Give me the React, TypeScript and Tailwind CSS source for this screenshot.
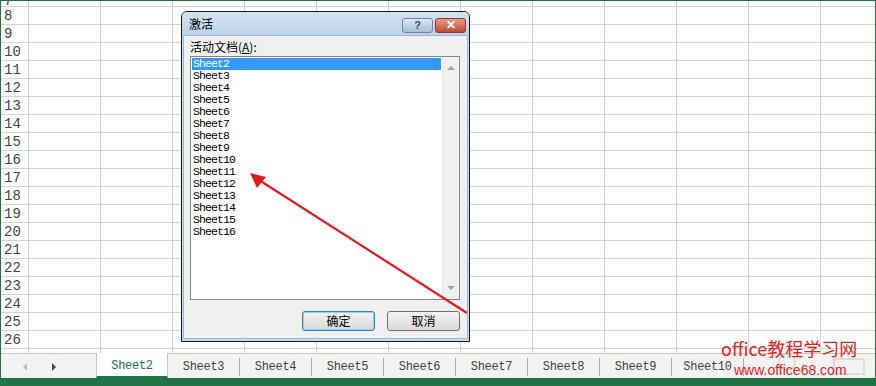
const rows = [8, 9, 10, 11, 12, 13, 14, 15, 16, 17, 18, 19, 20, 21, 22, 23, 24, 25, 26]
const cols = Array.from({ length: 12 }, (_, i) => i)
const sheets = ['Sheet2', 'Sheet3', 'Sheet4', 'Sheet5', 'Sheet6', 'Sheet7', 'Sheet8', 'Sheet9', 'Sheet10', 'Sheet11', 'Sheet12', 'Sheet13', 'Sheet14', 'Sheet15', 'Sheet16']
const tabs = ['Sheet2', 'Sheet3', 'Sheet4', 'Sheet5', 'Sheet6', 'Sheet7', 'Sheet8', 'Sheet9', 'Sheet10']

function GridRow({ label }: { label: string }) {
  return (
    <div className="flex h-[18px] border-b border-[#d4d4d4] overflow-hidden">
      <div className="w-[28px] shrink-0 border-r border-[#d4d4d4] flex items-center pl-[3px] text-[14px] text-[#444] font-['Liberation_Mono',monospace] leading-none">
        {label}
      </div>
      {cols.map((c) => (
        <div key={c} className="w-[72px] shrink-0 border-r border-[#d4d4d4]" />
      ))}
    </div>
  )
}

function Dialog() {
  return (
    <div className="absolute left-[180px] top-[10px] w-[289px] h-[331px] border border-[#1b1b1b] rounded-t-[6px] bg-[#c7daee] flex flex-col">
      <div className="h-[23px] shrink-0 flex items-center justify-between pl-[7px] pr-[3px] rounded-t-[5px] bg-gradient-to-b from-[#d3e2f2] to-[#bdd3ea]">
        <span className="text-[12px] text-black font-['Noto_Sans_CJK_SC',sans-serif] mt-[1px]">激活</span>
        <div className="flex gap-[2px] mt-[3px]">
          <div className="w-[31px] h-[15px] rounded-[3px] border border-[#6d87a8] bg-gradient-to-b from-[#dbe7f3] to-[#a9bfd8] flex items-center justify-center text-[11px] font-bold text-[#3b4d66] font-['Liberation_Sans',sans-serif] leading-none">
            ?
          </div>
          <div className="w-[31px] h-[15px] rounded-[3px] border border-[#8e3b2b] bg-gradient-to-b from-[#e29b88] to-[#c34a34] flex items-center justify-center text-[12px] font-bold text-white font-['Liberation_Sans',sans-serif] leading-none">
            ✕
          </div>
        </div>
      </div>
      <div className="flex-1 mx-[1px] mb-[2px] bg-[#f0f0f0] border border-[#9fb6cf] flex flex-col pl-[6px] pr-[7px]">
        <div className="h-[20px] flex items-end text-[12px] text-black font-['Noto_Sans_CJK_SC',sans-serif] leading-none pb-[3px]">
          活动文档(<span className="underline">A</span>):
        </div>
        <div className="h-[244px] border border-[#828790] bg-white flex">
          <div className="flex-1 p-[1px] font-['Liberation_Mono',monospace] text-[11.5px] tracking-[-0.9px] leading-[12px] text-black">
            {sheets.map((s, i) => (
              <div key={s} className={`h-[12px] pl-[1px] ${i === 0 ? 'bg-[#3399ff] text-white' : ''}`}>
                {s}
              </div>
            ))}
          </div>
          <div className="w-[17px] bg-[#f0f0f0] border-l border-[#e6e6e6] flex flex-col justify-between items-center py-[9px]">
            <div className="w-0 h-0 border-l-[4px] border-r-[4px] border-b-[4px] border-l-transparent border-r-transparent border-b-[#a3a3a3]" />
            <div className="w-0 h-0 border-l-[4px] border-r-[4px] border-t-[4px] border-l-transparent border-r-transparent border-t-[#a3a3a3]" />
          </div>
        </div>
        <div className="flex justify-end gap-[12px] mt-[11px] font-['Noto_Sans_CJK_SC',sans-serif] text-[12px] text-black">
          <div className="w-[73px] h-[20px] rounded-[3px] border border-[#3c7fb1] shadow-[inset_0_0_0_1px_#94d2f2] bg-gradient-to-b from-[#f3f3f3] to-[#d9d9d9] flex items-center justify-center">
            确定
          </div>
          <div className="w-[73px] h-[20px] rounded-[3px] border border-[#707070] bg-gradient-to-b from-[#f3f3f3] to-[#d9d9d9] flex items-center justify-center">
            取消
          </div>
        </div>
      </div>
    </div>
  )
}

export default function App() {
  return (
    <div className="relative w-[876px] h-[386px] overflow-hidden bg-white border-t border-l border-r border-[#217346] flex flex-col">
      <div className="flex flex-col">
        <div className="flex h-[6px] border-b border-[#d4d4d4] overflow-hidden">
          <div className="w-[28px] shrink-0 border-r border-[#d4d4d4] relative">
            <span className="absolute left-[3px] -bottom-[1px] text-[14px] leading-[12px] text-[#444] font-['Liberation_Mono',monospace]">7</span>
          </div>
          {cols.map((c) => (
            <div key={c} className="w-[72px] shrink-0 border-r border-[#d4d4d4]" />
          ))}
        </div>
        {rows.map((r) => (
          <GridRow key={r} label={String(r)} />
        ))}
        <div className="flex h-[4px] overflow-hidden">
          <div className="w-[28px] shrink-0 border-r border-[#d4d4d4]" />
          {cols.map((c) => (
            <div key={c} className="w-[72px] shrink-0 border-r border-[#d4d4d4]" />
          ))}
        </div>
      </div>

      <div className="h-[25px] shrink-0 bg-[#f3f3f3] flex border-t border-[#c6c6c6] font-['Liberation_Mono',monospace] text-[12px] tracking-[-0.3px]">
        <div className="w-[95px] shrink-0 flex items-center pt-[2px]">
          <div className="ml-[22px] w-0 h-0 border-t-[4px] border-b-[4px] border-r-[4px] border-t-transparent border-b-transparent border-r-[#bdbdbd]" />
          <div className="ml-[25px] w-0 h-0 border-t-[4px] border-b-[4px] border-l-[4px] border-t-transparent border-b-transparent border-l-[#1e5b3a]" />
        </div>
        {tabs.map((t, i) =>
          i === 0 ? (
            <div key={t} className="w-[72px] shrink-0 -mt-[1px] pt-[3px] bg-white border-l border-r border-[#c6c6c6] border-b-[2px] border-b-[#217346] flex items-center justify-center text-[#217346]">
              {t}
            </div>
          ) : (
            <div key={t} className="w-[72px] shrink-0 flex items-center pt-[2px]">
              <div className="flex-1 text-center text-[#444]">{t}</div>
              <div className="w-px h-[18px] bg-[#ababab]" />
            </div>
          )
        )}
      </div>
      <div className="h-[8px] shrink-0 bg-[#217346] -mx-[1px]" />

      <Dialog />

      <svg className="absolute left-0 top-0 pointer-events-none" width="876" height="386">
        <line x1="466" y1="312" x2="258" y2="179" stroke="#e41b1b" strokeWidth="2.2" />
        <polygon points="249,172 265,176 256,187" fill="#e41b1b" />
        <circle cx="786" cy="361" r="8" fill="none" stroke="#c8c8c8" strokeWidth="1" />
        <rect x="833" y="358" width="30" height="15" fill="none" stroke="#c8c8c8" />
      </svg>

      <div className="absolute left-[720px] top-[336px] text-[18px] leading-[22px] text-[#e8211b] font-['Noto_Sans_CJK_SC',sans-serif] whitespace-nowrap">
        office教程学习网
      </div>
      <div className="absolute left-[733px] top-[360px] text-[14px] leading-[18px] text-[#e8211b] font-['Liberation_Sans',sans-serif] whitespace-nowrap">
        www.office68.com
      </div>
    </div>
  )
}
